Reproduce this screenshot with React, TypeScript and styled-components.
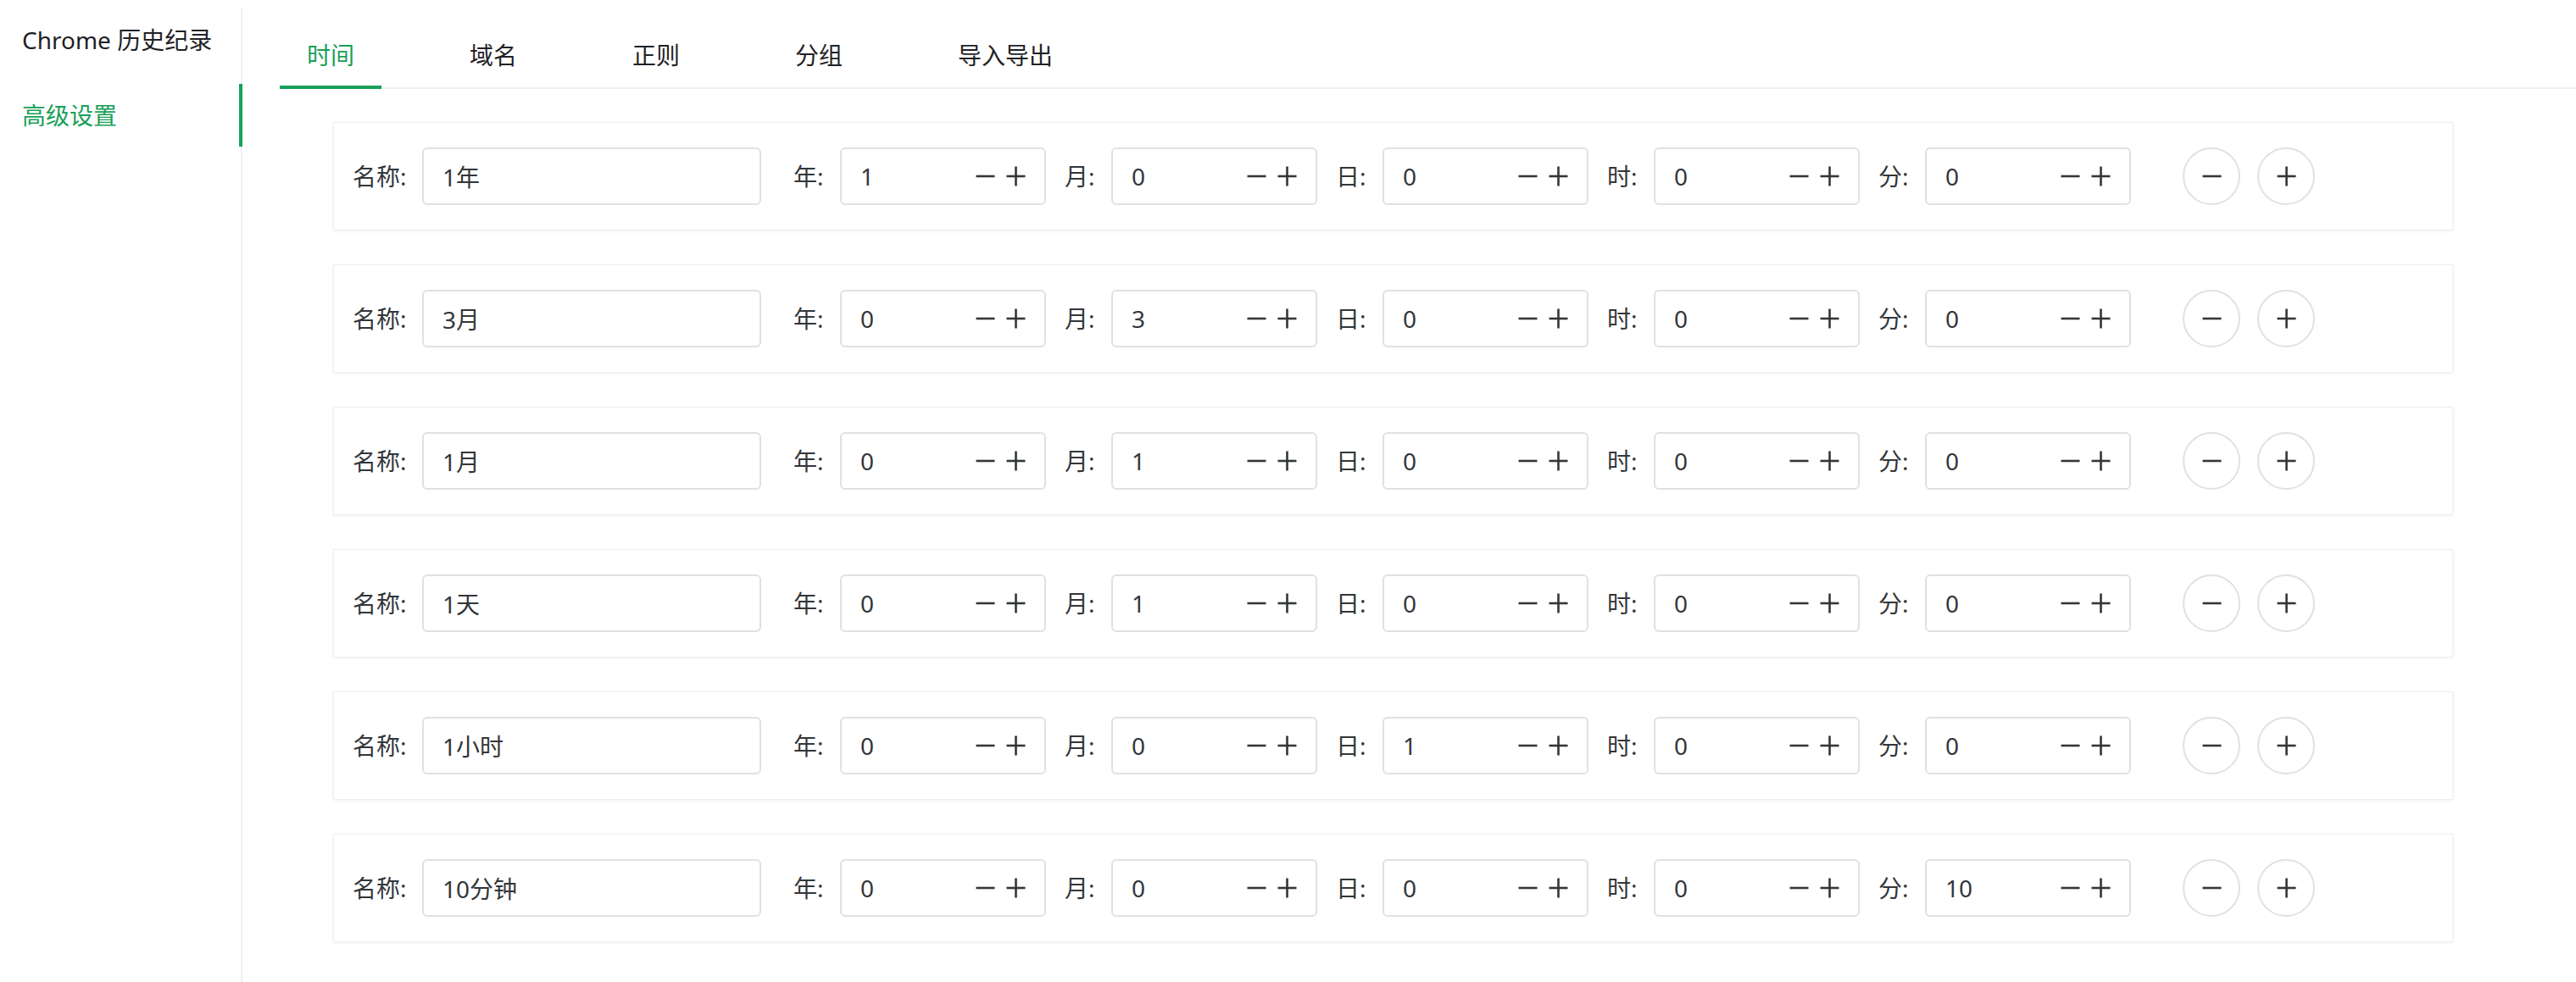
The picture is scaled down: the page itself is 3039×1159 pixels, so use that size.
import React from "react";
import styled, { createGlobalStyle } from "styled-components";

const GlobalStyle = createGlobalStyle`
  html, body {
    margin: 0;
    padding: 0;
    background: #fff;
  }
  body {
    font-family: "Noto Sans", "Noto Sans CJK SC", sans-serif;
    color: #333639;
  }
`;

const Page = styled.div`
  display: flex;
  min-height: 1159px;
`;

const Sidebar = styled.nav`
  width: 284px;
  flex-shrink: 0;
  margin-top: 9px;
  padding-top: 1px;
  border-right: 2px solid #efeff5;
  display: flex;
  flex-direction: column;
  gap: 15px;
`;

const MenuItem = styled.div<{ active?: boolean }>`
  position: relative;
  height: 74px;
  display: flex;
  align-items: center;
  padding-left: 26px;
  font-size: 28px;
  line-height: 1;
  color: ${(p) => (p.active ? "#18a058" : "#1f2225")};

  &::after {
    content: "";
    display: ${(p) => (p.active ? "block" : "none")};
    position: absolute;
    top: 0;
    bottom: 0;
    right: -2px;
    width: 4px;
    background: #18a058;
  }
`;

const Main = styled.main`
  flex: 1;
  padding-left: 44px;
`;

const TabList = styled.div`
  display: flex;
  gap: 72px;
  height: 75px;
  margin-top: 28px;
  border-bottom: 2px solid #efeff5;
`;

const Tab = styled.div<{ active?: boolean }>`
  display: flex;
  align-items: center;
  padding: 0 32px;
  margin-bottom: -2px;
  font-size: 28px;
  line-height: 1;
  color: ${(p) => (p.active ? "#18a058" : "#1f2225")};
  border-bottom: 4px solid ${(p) => (p.active ? "#18a058" : "transparent")};
`;

const CardList = styled.div`
  display: flex;
  flex-direction: column;
  gap: 40px;
  padding: 39px 0 0 63px;
`;

const Card = styled.div`
  width: 2501px;
  height: 128px;
  box-sizing: border-box;
  display: flex;
  align-items: center;
  padding-left: 22px;
  background: #fff;
  border: 1px solid #eeeef2;
  box-shadow: 0 1px 4px rgba(0, 0, 0, 0.06);
`;

const Field = styled.div<{ trail?: number }>`
  display: flex;
  align-items: center;
  gap: ${(p) => (p.trail === undefined ? 22 : 20)}px;
  margin-right: ${(p) => p.trail ?? 22}px;
`;

const Label = styled.span<{ width: number }>`
  width: ${(p) => p.width}px;
  flex-shrink: 0;
  font-size: 28px;
  line-height: 1;
  color: #333639;
  white-space: nowrap;
`;

const InputBox = styled.div<{ width: number }>`
  width: ${(p) => p.width}px;
  height: 68px;
  box-sizing: border-box;
  display: flex;
  align-items: center;
  padding: 0 22px 0 22px;
  border: 2px solid #e0e0e6;
  border-radius: 6px;
  background: #fff;
`;

const TextInput = styled.input`
  flex: 1;
  min-width: 0;
  border: none;
  outline: none;
  padding: 0;
  background: transparent;
  font-family: "Noto Sans", "Noto Sans CJK SC", sans-serif;
  font-size: 28px;
  line-height: 1;
  color: #333639;
`;

const StepGroup = styled.div`
  display: flex;
  align-items: center;
  gap: 13px;
`;

const StepIcon = styled.svg`
  width: 23px;
  height: 24px;
  display: block;
  color: #333639;
`;

const ActionGroup = styled.div`
  display: flex;
  gap: 20px;
  margin-left: 39px;
`;

const CircleButton = styled.button`
  width: 68px;
  height: 68px;
  box-sizing: border-box;
  border-radius: 50%;
  border: 2px solid #e0e0e6;
  background: #fff;
  padding: 0;
  display: flex;
  align-items: center;
  justify-content: center;
  cursor: pointer;
`;

const MinusIcon = () => (
  <StepIcon viewBox="0 0 23 24">
    <line x1="0.5" y1="12" x2="22.5" y2="12" stroke="currentColor" strokeWidth="2.6" />
  </StepIcon>
);

const PlusIcon = () => (
  <StepIcon viewBox="0 0 23 24">
    <line x1="0.5" y1="12" x2="22.5" y2="12" stroke="currentColor" strokeWidth="2.6" />
    <line x1="11.5" y1="0.5" x2="11.5" y2="23.5" stroke="currentColor" strokeWidth="2.6" />
  </StepIcon>
);

interface Preset {
  name: string;
  values: number[];
}

const units = ["年", "月", "日", "时", "分"];

const presets: Preset[] = [
  { name: "1年", values: [1, 0, 0, 0, 0] },
  { name: "3月", values: [0, 3, 0, 0, 0] },
  { name: "1月", values: [0, 1, 0, 0, 0] },
  { name: "1天", values: [0, 1, 0, 0, 0] },
  { name: "1小时", values: [0, 0, 1, 0, 0] },
  { name: "10分钟", values: [0, 0, 0, 0, 10] },
];

const tabs = ["时间", "域名", "正则", "分组", "导入导出"];

const NumberField: React.FC<{ unit: string; value: number }> = ({ unit, value }) => (
  <Field>
    <Label width={33}>{unit}:</Label>
    <InputBox width={243}>
      <TextInput readOnly defaultValue={String(value)} />
      <StepGroup>
        <MinusIcon />
        <PlusIcon />
      </StepGroup>
    </InputBox>
  </Field>
);

const PresetRow: React.FC<{ preset: Preset }> = ({ preset }) => (
  <Card>
    <Field trail={38}>
      <Label width={62}>名称:</Label>
      <InputBox width={400}>
        <TextInput readOnly defaultValue={preset.name} />
      </InputBox>
    </Field>
    {units.map((u, i) => (
      <NumberField key={u} unit={u} value={preset.values[i]} />
    ))}
    <ActionGroup>
      <CircleButton>
        <MinusIcon />
      </CircleButton>
      <CircleButton>
        <PlusIcon />
      </CircleButton>
    </ActionGroup>
  </Card>
);

export default function App() {
  return (
    <>
      <GlobalStyle />
      <Page>
        <Sidebar>
          <MenuItem>Chrome 历史纪录</MenuItem>
          <MenuItem active>高级设置</MenuItem>
        </Sidebar>
        <Main>
          <TabList>
            {tabs.map((t, i) => (
              <Tab key={t} active={i === 0}>
                {t}
              </Tab>
            ))}
          </TabList>
          <CardList>
            {presets.map((p) => (
              <PresetRow key={p.name} preset={p} />
            ))}
          </CardList>
        </Main>
      </Page>
    </>
  );
}
